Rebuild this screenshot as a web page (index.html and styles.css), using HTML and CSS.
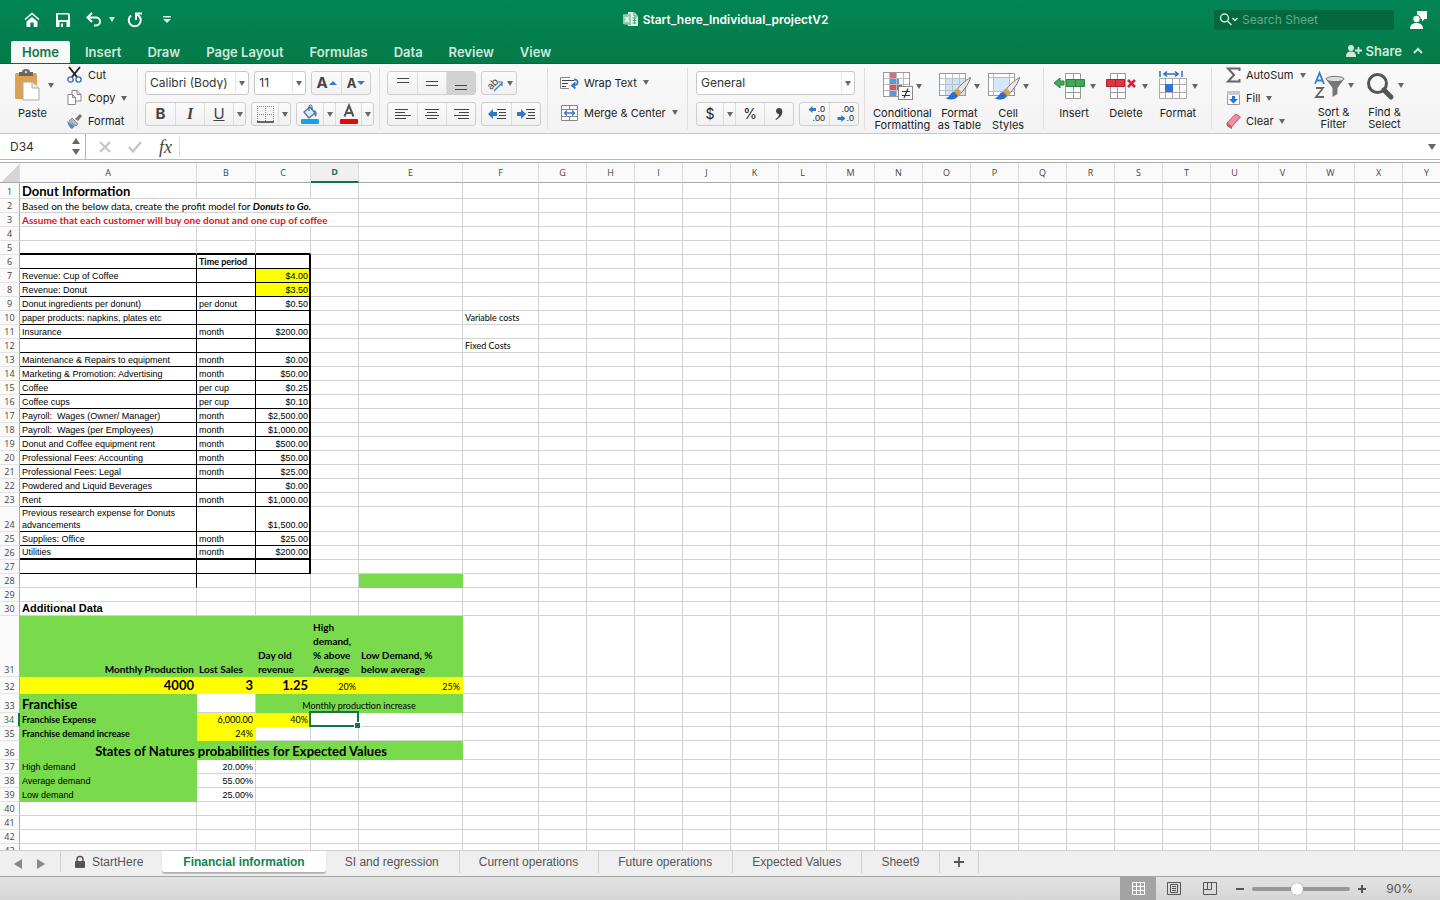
FILE: index.html
```html
<!DOCTYPE html>
<html lang="en">
<head>
<meta charset="utf-8">
<title>Start_here_Individual_projectV2</title>
<link rel="stylesheet" href="styles.css">
</head>
<body>
<header class="top">
  <div class="titlebar">
    <div class="quick">
      <button aria-label="Home"><svg width="16" height="16" viewBox="0 0 16 16"><path d="M1 7.500 8 1.500l7 6" fill="none" stroke="#fff" stroke-width="1.600"/><path d="M2.500 9.600 8 5l5.500 4.600V15H9.700v-4.500H6.300V15H2.500z" fill="#fff"/></svg></button>
      <button aria-label="Save" class="q-save"><svg width="14" height="14" viewBox="0 0 14 14"><path d="M0 0h12.500L14 1.500V14H0zM2 1.500V7h10V1.500zM3.500 9v5h7V9zM5 10.500h2V14H5z" fill="#fff" fill-rule="evenodd"/></svg></button>
      <button aria-label="Undo" class="q-undo"><svg width="17" height="15" viewBox="0 0 17 15"><path d="M6 1 1.500 5.500 6 10M2 5.500h8a4 4 0 0 1 0 8H8" fill="none" stroke="#fff" stroke-width="2"/></svg><i class="caret light"></i></button>
      <button aria-label="Redo" class="q-redo"><svg width="16" height="16" viewBox="0 0 16 16"><path d="M4 3.500A6 6 0 1 0 12 4L9.500 2" fill="none" stroke="#fff" stroke-width="2"/><path d="M9 8V1.500h6" fill="none" stroke="#fff" stroke-width="2"/></svg></button>
      <button aria-label="Customize toolbar" class="q-more"><svg width="8" height="8" viewBox="0 0 8 8"><path d="M0 0h8v1.500H0zM0 3h8L4 7z" fill="#e4f3ea"/></svg></button>
    </div>
    <h1 class="doc"><svg width="16" height="15" viewBox="0 0 16 15"><path d="M5 0h6l4 4v10H5z" fill="#e6f4ec"/><path d="M11 0v4h4" fill="none" stroke="#3c9a6c"/><path d="M0 2.500 8 1.500v12L0 12z" fill="#8fcbac"/><path d="m2 5 4 5M6 5l-4 5" stroke="#fff" stroke-width="1.300"/><path d="M9.500 6h4M9.500 8.500h4M9.500 11h4M11.500 5v7" stroke="#4fa87c"/></svg>Start_here_Individual_projectV2</h1>
    <div class="right">
      <label class="search"><svg width="20" height="13" viewBox="0 0 20 13"><circle cx="5.500" cy="5" r="4" fill="none" stroke="#d5ecdf" stroke-width="1.400"/><path d="m8.500 8 4 4M13.500 5l2.500 2.500L18.500 5" fill="none" stroke="#d5ecdf" stroke-width="1.400"/></svg><input type="search" placeholder="Search Sheet" aria-label="Search Sheet"></label>
      <button aria-label="Account"><svg width="18" height="18" viewBox="0 0 18 18"><path d="M8 0h10v8h-2.500L13 10.500V8H8z" fill="#fff"/><circle cx="7.500" cy="8" r="3.800" fill="#fff" stroke="#047f4e"/><path d="M1 18c0-4 2.500-6 6.500-6s6.500 2 6.500 6z" fill="#fff"/></svg></button>
    </div>
  </div>
  <nav class="tabs">
    <button class="on">Home</button><button>Insert</button><button>Draw</button><button>Page Layout</button><button>Formulas</button><button>Data</button><button>Review</button><button>View</button>
    <button class="share"><svg width="16" height="12" viewBox="0 0 16 12"><circle cx="5" cy="3" r="3" fill="#cfe9da"/><path d="M0 12c0-4 1.500-5.500 5-5.500s5 1.500 5 5.500z" fill="#cfe9da"/><path d="M12.500 2v7M9 5.500h7" stroke="#cfe9da" stroke-width="1.800"/></svg>Share</button>
    <button class="fold" aria-label="Collapse ribbon"><svg width="10" height="7" viewBox="0 0 10 7"><path d="m1 6 4-4 4 4" fill="none" stroke="#cfe9da" stroke-width="2"/></svg></button>
  </nav>
</header>

<section class="ribbon" aria-label="Home">
  <div class="group clip">
    <button class="big paste"><span class="pic"><svg width="26" height="32" viewBox="0 0 26 32"><rect x="0" y="4" width="22" height="26" rx="1.500" fill="#dca252"/><path d="M4 7V3h3a4 3 0 0 1 8 0h3v4z" fill="#666"/><circle cx="11" cy="3" r="1.300" fill="#ccc"/><path d="M8 13h9l7 6v12H8z" fill="#fff" stroke="#aaa"/><path d="M17 13v6h7" fill="#eee" stroke="#aaa"/></svg><i class="caret"></i></span>Paste</button>
    <div class="list">
      <button><svg width="15" height="16" viewBox="0 0 15 16"><path d="m2 0 8 10M13 0 5 10" stroke="#222" stroke-width="2"/><circle cx="3.500" cy="12.500" r="2.600" fill="none" stroke="#3f6fb5" stroke-width="1.400"/><circle cx="11.500" cy="12.500" r="2.600" fill="none" stroke="#3f6fb5" stroke-width="1.400"/></svg>Cut</button>
      <button><svg width="15" height="16" viewBox="0 0 15 16"><path d="M5 .5h5l4 4V11H5z" fill="#fff" stroke="#888"/><path d="M1 4.500h4.500l3 3v7H1z" fill="#fff" stroke="#888"/><path d="M10 .5v4h4M5.500 4.500v3h3" fill="none" stroke="#888"/></svg>Copy<i class="caret"></i></button>
      <button><svg width="15" height="15" viewBox="0 0 15 15"><path d="m8 5 5-5 2 2-4 5z" fill="#777"/><path d="m5 4 6 6-2 2-7-5z" fill="#bbb" stroke="#777" stroke-width=".8"/><path d="m0 7 8 5-3 3c-2-1-4-4-5-8z" fill="#5b83cf"/></svg>Format</button>
    </div>
  </div>

  <div class="group rows font">
    <div class="row">
      <span class="sel fam"><select aria-label="Font"><option>Calibri (Body)</option></select></span>
      <span class="sel size"><select aria-label="Font size"><option>11</option></select></span>
      <span class="seg"><button aria-label="Increase font size"><b class="glyph">A</b><i class="tri up"></i></button><button aria-label="Decrease font size"><b class="glyph sm">A</b><i class="tri dn"></i></button></span>
    </div>
    <div class="row">
      <span class="seg"><button class="glyph"><b>B</b></button><button class="glyph it">I</button><button class="glyph un">U</button><button class="nar" aria-label="Underline options"><i class="caret"></i></button></span>
      <span class="seg"><button class="mid" aria-label="Borders"><svg width="17" height="17" viewBox="0 0 17 17"><path d="M.5 0v16M8.500 0v16M16.500 0v16M0 .5h17M0 8.500h17" stroke="#888" stroke-dasharray="1 1"/><path d="M0 16h17" stroke="#333" stroke-width="1.500"/></svg></button><button class="nar" aria-label="Border options"><i class="caret"></i></button></span>
      <span class="seg color"><button class="mid" aria-label="Fill color"><svg width="18" height="19" viewBox="0 0 18 19"><path d="m3 7 6-5 5 6-6 5z" fill="#dfe9f6" stroke="#4a7ab8" stroke-width="1.300"/><path d="M8 6V1.500a1.500 1.500 0 0 1 3 0V5" fill="none" stroke="#555"/><path d="M13 5c3 1 3 4 2 7-2-1-2-4-2-7z" fill="#4a7ab8"/><rect y="14" width="18" height="5" rx="1" fill="#14a5e0"/></svg></button><button class="nar" aria-label="Fill color options"><i class="caret"></i></button><button class="mid" aria-label="Font color"><svg width="18" height="19" viewBox="0 0 18 19"><path d="m4.500 11.500 4.500-11 4.500 11M6 8h6" fill="none" stroke="#555" stroke-width="2"/><rect y="14" width="18" height="5" rx="1" fill="#e6060c"/></svg></button><button class="nar" aria-label="Font color options"><i class="caret"></i></button></span>
    </div>
  </div>

  <div class="group rows align">
    <div class="row">
      <span class="seg"><button aria-label="Top align"><svg width="16" height="16" viewBox="0 0 16 16"><path d="M2 3.500h12M2 7.500h12" stroke="#444"/></svg></button><button aria-label="Middle align"><svg width="16" height="16" viewBox="0 0 16 16"><path d="M2 6.500h12M2 10.500h12" stroke="#444"/></svg></button><button class="pressed" aria-label="Bottom align"><svg width="16" height="16" viewBox="0 0 16 16"><path d="M2 10.500h12M2 14.500h12" stroke="#444"/></svg></button></span>
      <span class="seg"><button class="orient" aria-label="Orientation"><svg width="18" height="18" viewBox="0 0 18 18"><text x="1" y="13" transform="rotate(-45 7 10)" class="ab">ab</text><path d="m8 17 8-8M12 8h4v4" fill="none" stroke="#3579c8" stroke-width="1.200"/></svg><i class="caret"></i></button></span>
    </div>
    <div class="row">
      <span class="seg"><button aria-label="Align left"><svg width="16" height="12" viewBox="0 0 16 12"><path d="M0 1.500h13M0 4.500h10M0 7.500h16M0 10.500h11" stroke="#444"/></svg></button><button aria-label="Center"><svg width="16" height="12" viewBox="0 0 16 12"><path d="M1 1.500h14M3 4.500h10M1 7.500h14M3 10.500h10" stroke="#444"/></svg></button><button aria-label="Align right"><svg width="16" height="12" viewBox="0 0 16 12"><path d="M1 1.500h15M6 4.500h10M1 7.500h15M5 10.500h11" stroke="#444"/></svg></button></span>
      <span class="seg"><button aria-label="Decrease indent"><svg width="18" height="12" viewBox="0 0 18 12"><path d="M9 1.500h9M11 4.500h7M11 7.500h7M9 10.500h9" stroke="#444"/><path d="m0 6 5-5v3h4v4H5v3z" fill="#3478c9"/></svg></button><button aria-label="Increase indent"><svg width="18" height="12" viewBox="0 0 18 12"><path d="M9 1.500h9M11 4.500h7M11 7.500h7M9 10.500h9" stroke="#444"/><path d="m9 6-5-5v3H0v4h4v3z" fill="#3478c9"/></svg></button></span>
    </div>
  </div>

  <div class="group rows wrapg">
    <button class="line"><svg width="20" height="14" viewBox="0 0 20 14"><path d="M9 12.500H.5V1.500H10" fill="none" stroke="#888"/><path d="M2 4.500h12M2 7.500h6M2 10.500h4" stroke="#444"/><path d="M14 3.500c5 0 5 6-1 6M15.500 6.500l-3.500 3 3.500 3" fill="none" stroke="#3478c9" stroke-width="1.800"/></svg>Wrap Text<i class="caret"></i></button>
    <button class="line"><svg width="20" height="16" viewBox="0 0 20 16"><path d="M1.500.5h16v15h-16zM1.500 4.500h16M1.500 11.500h16M9.500.5v4M9.500 11.500v4" fill="#fff" stroke="#888"/><path d="M5 8h9M7 5.500 4.500 8 7 10.500M12 5.500 14.500 8 12 10.500" fill="none" stroke="#3478c9" stroke-width="1.300"/></svg>Merge &amp; Center<i class="caret"></i></button>
  </div>

  <div class="group rows num">
    <div class="row"><span class="sel gen"><select aria-label="Number format"><option>General</option></select></span></div>
    <div class="row">
      <span class="seg"><button class="mid cur">$</button><button class="nar" aria-label="Currency options"><i class="caret"></i></button><button class="cur">%</button><button aria-label="Comma style"><svg width="8" height="14" viewBox="0 0 8 14"><path d="M4 1c5 0 5 8-3 12l-.500-1c3-2 3.500-3 3.500-5C0 7 0 1 4 1z" fill="#444"/></svg></button></span>
      <span class="seg"><button class="dec" aria-label="Increase decimal"><span><i class="arl"></i>.0</span><span>.00</span></button><button class="dec" aria-label="Decrease decimal"><span>.00</span><span><i class="arr"></i>.0</span></button></span>
    </div>
  </div>

  <div class="group bigs styles">
    <button class="big"><span class="pic"><svg width="32" height="30" viewBox="0 0 32 30"><rect x="1.500" y="1.500" width="26" height="24" fill="#fff" stroke="#999"/><path d="M8 2h6v6H8z" fill="#e46a72"/><path d="M8 8h9v6H8z" fill="#5c95dc"/><path d="M8 14h12v6H8z" fill="#e0525f"/><path d="M8 20h6v5H8z" fill="#5c95dc"/><path d="M7.500 2v23M14.500 2v23M21.500 2v23M2 7.500h25M2 13.500h25M2 19.500h25" stroke="#bbb"/><rect x="16.500" y="15.500" width="14" height="13" fill="#fff" stroke="#888"/><path d="M20 20.500h8M20 24.500h8M26 17.500l-4 9.500" stroke="#333" stroke-width="1.200"/></svg><i class="caret"></i></span>Conditional<br>Formatting</button>
    <button class="big"><span class="pic"><svg width="34" height="30" viewBox="0 0 34 30"><rect x="1.500" y="2.500" width="26" height="22" fill="#fff" stroke="#999"/><path d="M8 8h19v16H8z" fill="#cfe2f5"/><path d="M7.500 3v21M14.500 3v21M21.500 3v21M2 7.500h25M2 13.500h25M2 19.500h25" stroke="#b5c4d2"/><path d="M32.500 6.500c-5 3-11 8-13.500 12.500l3.500 3.500c4-4 9-11 10-16z" fill="#e8e8e8" stroke="#777"/><path d="m15.500 20 3.500-2.500c2 .5 4 2.500 4 4.500l-3 4z" fill="#e0a140"/><path d="M7.500 27c5 0 4-6 9-6l3.500 4c-2 4-8 4.500-12.500 2z" fill="#2a6fd0"/></svg><i class="caret"></i></span>Format<br>as Table</button>
    <button class="big"><span class="pic"><svg width="34" height="30" viewBox="0 0 34 30"><rect x="1.500" y="2.500" width="26" height="22" fill="#fff" stroke="#999"/><path d="M7 7h16v13H7z" fill="#d5e6f8"/><path d="M6.500 3v21M22.500 3v21M2 6.500h25M2 20.500h25" stroke="#bbb"/><path d="M32.500 6.500c-5 3-11 8-13.500 12.500l3.500 3.500c4-4 9-11 10-16z" fill="#e8e8e8" stroke="#777"/><path d="m15.500 20 3.500-2.500c2 .5 4 2.500 4 4.500l-3 4z" fill="#e0a140"/><path d="M7.500 27c5 0 4-6 9-6l3.500 4c-2 4-8 4.500-12.500 2z" fill="#2a6fd0"/></svg><i class="caret"></i></span>Cell<br>Styles</button>
  </div>

  <div class="group bigs cells">
    <button class="big"><span class="pic"><svg width="33" height="28" viewBox="0 0 33 28"><path d="M12.500 1.500h15v25h-15zM20.500 1v25M12.500 7.500h15M12.500 20.500h15" fill="#fff" stroke="#999"/><path d="M13.500 7.500h18v7h-18z" fill="#43a853" stroke="#2b8440"/><path d="M22.500 8v6" stroke="#2b8440"/><path d="m1 11 6-5v3h4v4H7v3z" fill="#43a853" stroke="#2b8440"/></svg><i class="caret"></i></span>Insert</button>
    <button class="big"><span class="pic"><svg width="33" height="28" viewBox="0 0 33 28"><path d="M5.500 1.500h15v25h-15zM12.500 1v25M5.500 7.500h15M5.500 20.500h15" fill="#fff" stroke="#999"/><path d="M1.500 7.500h18v7h-18z" fill="#e03545" stroke="#b3202f"/><path d="M10.500 8v6" stroke="#b3202f"/><path d="m23 8 7 7M30 8l-7 7" stroke="#d02738" stroke-width="2.600"/></svg><i class="caret"></i></span>Delete</button>
    <button class="big"><span class="pic"><svg width="30" height="30" viewBox="0 0 30 30"><path d="M2 0v6M24 0v6" stroke="#2a6fc4" stroke-width="1.500"/><path d="M6 3h14M9 .5 6 3l3 2.500M17 .5 20 3l-3 2.500" fill="none" stroke="#2a6fc4" stroke-width="1.600"/><path d="M1.500 7.500h27v20h-27zM7.500 7.500v20M14.500 7.500v20M21.500 7.500v20M1.500 13.500h27M1.500 21.500h27" fill="#fff" stroke="#aaa"/><path d="M7 13h8v8H7z" fill="#2f78d2"/></svg><i class="caret"></i></span>Format</button>
  </div>

  <div class="group edit">
    <div class="list">
      <button><svg width="15" height="16" viewBox="0 0 15 16"><path d="M13.500 4V1.500H2L8 8l-6 6.500h11.500V12" fill="none" stroke="#666" stroke-width="2"/></svg>AutoSum<i class="caret wide"></i></button>
      <button><svg width="15" height="16" viewBox="0 0 15 16"><path d="M1.500 1.500h12v13h-12z" fill="#fff" stroke="#999"/><path d="M1 1h13v4H1z" fill="#c8c8c8"/><path d="M6 6h3v3h3l-4.500 4.500L3 9h3z" fill="#2f74cc"/></svg>Fill<i class="caret"></i></button>
      <button><svg width="15" height="16" viewBox="0 0 15 16"><path d="M1 10 9.500 1l5 3-9 10z" fill="#f58ba4" stroke="#c05570"/><path d="m1 10 4.500 4v1.500l-4.500-3z" fill="#d5526f" stroke="#c05570"/></svg>Clear<i class="caret"></i></button>
    </div>
    <button class="big"><span class="pic"><svg width="30" height="28" viewBox="0 0 30 28"><path d="m1 12 4.500-11L10 12M2.500 8.500h6" fill="none" stroke="#2f80d0" stroke-width="1.800"/><path d="M2 16h7L2 25h8" fill="none" stroke="#666" stroke-width="1.800"/><path d="M12 7h18l-6.500 9v6l-5 3v-9z" fill="#777"/><ellipse cx="21" cy="7" rx="9" ry="2.600" fill="#ddd" stroke="#777"/></svg><i class="caret"></i></span>Sort &amp;<br>Filter</button>
    <button class="big"><span class="pic"><svg width="28" height="28" viewBox="0 0 28 28"><circle cx="11.500" cy="11.500" r="9" fill="none" stroke="#555" stroke-width="3"/><path d="m18 18 7 7" stroke="#555" stroke-width="5" stroke-linecap="round"/></svg><i class="caret"></i></span>Find &amp;<br>Select</button>
  </div>
</section>

<section class="formula">
  <div class="namebox"><input value="D34" aria-label="Name box"><span class="spin"><i class="su"></i><i class="sd"></i></span></div>
  <button aria-label="Cancel"><svg width="12" height="12" viewBox="0 0 12 12"><path d="m1 1 10 10M11 1 1 11" stroke="#c4c4c4" stroke-width="2"/></svg></button>
  <button aria-label="Enter"><svg width="14" height="12" viewBox="0 0 14 12"><path d="m1 6 4 4.500L13 1" fill="none" stroke="#c4c4c4" stroke-width="2.200"/></svg></button>
  <button class="fx" aria-label="Insert function">fx</button>
  <input class="fbar" aria-label="Formula">
  <button class="expand" aria-label="Expand formula bar"><i class="sd"></i></button>
</section>

<main class="sheet">
<table id="grid">
<colgroup><col class="c0"><col class="ca"><col class="cb"><col class="cc"><col class="cd"><col class="ce"><col class="cf"></colgroup>
<thead><tr><th class="corner"></th><th>A</th><th>B</th><th>C</th><th class="cur">D</th><th>E</th><th>F</th></tr></thead>
<tbody>
<tr class="h16"><th>1</th><td class="t1">Donut Information</td></tr>
<tr><th>2</th><td colspan="4" class="cal t2">Based on the below data, create the profit model for <b><i>Donuts to Go.</i></b></td></tr>
<tr><th>3</th><td colspan="4" class="cal t2 red">Assume that each customer will buy one donut and one cup of coffee</td></tr>
<tr><th>4</th></tr>
<tr class="thick"><th>5</th><td></td><td></td><td></td></tr>
<tr class="box"><th>6</th><td></td><td class="cal"><b>Time period</b></td><td></td></tr>
<tr class="box"><th>7</th><td>Revenue: Cup of Coffee</td><td></td><td class="y">$4.00</td></tr>
<tr class="box"><th>8</th><td>Revenue: Donut</td><td></td><td class="y">$3.50</td></tr>
<tr class="box"><th>9</th><td>Donut ingredients per donunt)</td><td>per donut</td><td>$0.50</td></tr>
<tr class="box"><th>10</th><td>paper products: napkins, plates etc</td><td></td><td></td><td></td><td></td><td class="cal">Variable costs</td></tr>
<tr class="box"><th>11</th><td>Insurance</td><td>month</td><td>$200.00</td></tr>
<tr class="box"><th>12</th><td></td><td></td><td></td><td></td><td></td><td class="cal">Fixed Costs</td></tr>
<tr class="box"><th>13</th><td>Maintenance &amp; Repairs to equipment</td><td>month</td><td>$0.00</td></tr>
<tr class="box"><th>14</th><td>Marketing &amp; Promotion: Advertising</td><td>month</td><td>$50.00</td></tr>
<tr class="box"><th>15</th><td>Coffee</td><td>per cup</td><td>$0.25</td></tr>
<tr class="box"><th>16</th><td>Coffee cups</td><td>per cup</td><td>$0.10</td></tr>
<tr class="box"><th>17</th><td>Payroll:&nbsp; Wages (Owner/ Manager)</td><td>month</td><td>$2,500.00</td></tr>
<tr class="box"><th>18</th><td>Payroll:&nbsp; Wages (per Employees)</td><td>month</td><td>$1,000.00</td></tr>
<tr class="box"><th>19</th><td>Donut and Coffee equipment rent</td><td>month</td><td>$500.00</td></tr>
<tr class="box"><th>20</th><td>Professional Fees: Accounting</td><td>month</td><td>$50.00</td></tr>
<tr class="box"><th>21</th><td>Professional Fees: Legal</td><td>month</td><td>$25.00</td></tr>
<tr class="box"><th>22</th><td>Powdered and Liquid Beverages</td><td></td><td>$0.00</td></tr>
<tr class="box"><th>23</th><td>Rent</td><td>month</td><td>$1,000.00</td></tr>
<tr class="box h25"><th>24</th><td>Previous research expense for Donuts<br>advancements</td><td></td><td>$1,500.00</td></tr>
<tr class="box"><th>25</th><td>Supplies: Office</td><td>month</td><td>$25.00</td></tr>
<tr class="box last"><th>26</th><td>Utilities</td><td>month</td><td>$200.00</td></tr>
<tr class="box"><th>27</th><td></td><td></td><td></td></tr>
<tr><th>28</th><td class="edge"></td><td></td><td></td><td></td><td class="g"></td></tr>
<tr><th>29</th></tr>
<tr><th>30</th><td class="t30">Additional Data</td></tr>
<tr class="h61 cal strong"><th>31</th><td class="g r">Monthly Production</td><td class="g">Lost Sales</td><td class="g">Day old<br>revenue</td><td class="g">High<br>demand,<br>% above<br>Average</td><td class="g">Low Demand, %<br>below average</td></tr>
<tr class="h17 cal"><th>32</th><td class="y r big32">4000</td><td class="y r big32">3</td><td class="y r big32">1.25</td><td class="y r">20%</td><td class="y r">25%</td></tr>
<tr class="h19 cal"><th>33</th><td class="g big32">Franchise</td><td></td><td colspan="3" class="g c">Monthly production increase</td></tr>
<tr class="cal"><th class="cur">34</th><td class="g"><b>Franchise Expense</b></td><td class="y r">6,000.00</td><td class="y r">40%</td><td class="active"><span class="ring"></span></td></tr>
<tr class="cal"><th>35</th><td class="g"><b>Franchise demand increase</b></td><td class="y r">24%</td></tr>
<tr class="h19 cal"><th>36</th><td colspan="5" class="g c big32">States of Natures probabilities for Expected Values</td></tr>
<tr><th>37</th><td class="g">High demand</td><td class="r">20.00%</td></tr>
<tr><th>38</th><td class="g">Average demand</td><td class="r">55.00%</td></tr>
<tr><th>39</th><td class="g">Low demand</td><td class="r">25.00%</td></tr>
<tr><th>40</th></tr>
<tr><th>41</th></tr>
<tr><th>42</th></tr>
<tr><th>43</th></tr>
</tbody>
</table>
</main>

<footer>
  <div class="sheets">
    <div class="nav"><button aria-label="Previous sheet"><i class="pl"></i></button><button aria-label="Next sheet"><i class="pr"></i></button></div>
    <button class="tab"><svg width="10" height="12" viewBox="0 0 10 12"><rect y="5" width="10" height="7" rx="1" fill="#555"/><path d="M2 6V3.500a3 3 0 0 1 6 0V6" fill="none" stroke="#555" stroke-width="1.500"/></svg>StartHere</button>
    <button class="tab on">Financial information</button>
    <button class="tab">SI and regression</button>
    <button class="tab">Current operations</button>
    <button class="tab">Future operations</button>
    <button class="tab">Expected Values</button>
    <button class="tab">Sheet9</button>
    <button class="tab add" aria-label="Add sheet"><svg width="10" height="10" viewBox="0 0 10 10"><path d="M5 0v10M0 5h10" stroke="#555" stroke-width="1.800"/></svg></button>
  </div>
  <div class="status">
    <button class="view on" aria-label="Normal view"><svg width="13" height="13" viewBox="0 0 13 13"><path d="M.5.5h12v12H.5zM4.500 0v13M8.500 0v13M0 4.500h13M0 8.500h13" fill="none" stroke="#fff"/></svg></button>
    <button class="view" aria-label="Page layout"><svg width="14" height="13" viewBox="0 0 14 13"><path d="M.5.5h13v12H.5zM3.500 2.500h7v8h-7zM5 4.500h4M5 6.500h4M5 8.500h4" fill="none" stroke="#555"/></svg></button>
    <button class="view" aria-label="Page break preview"><svg width="14" height="13" viewBox="0 0 14 13"><path d="M.5.5h13v12H.5zM4.500.5v7M8.500.5v7M.5 7.500h8" fill="none" stroke="#555"/></svg></button>
    <button class="zb" aria-label="Zoom out"><svg width="8" height="8" viewBox="0 0 8 8"><path d="M0 4h8" stroke="#555" stroke-width="2"/></svg></button>
    <input type="range" min="10" max="170" value="82" aria-label="Zoom">
    <button class="zb" aria-label="Zoom in"><svg width="8" height="8" viewBox="0 0 8 8"><path d="M0 4h8M4 0v8" stroke="#555" stroke-width="2"/></svg></button>
    <output>90%</output>
  </div>
</footer>
<script src="grid.js"></script>
</body>
</html>
```
FILE: grid.js
```js
// Completes the header with its letters and every row with empty cells,
// as many columns as the window has room for.
const grid = document.getElementById('grid');
const FIXED_WIDTH = 539;
const FIXED_COLUMNS = 6;
const COLUMN_WIDTH = 48;
const count = FIXED_COLUMNS + Math.max(0, Math.ceil((window.innerWidth - FIXED_WIDTH) / COLUMN_WIDTH));
const name = n => (n < 26 ? '' : String.fromCharCode(64 + Math.floor(n / 26))) + String.fromCharCode(65 + (n % 26));
const cols = grid.querySelector('colgroup');
const head = grid.tHead.rows[0];
for (let n = FIXED_COLUMNS; n < count; n++) {
  cols.append(document.createElement('col'));
  const th = document.createElement('th');
  th.textContent = name(n);
  head.append(th);
}
for (const row of grid.tBodies[0].rows) {
  let used = -1;
  for (const cell of row.cells) used += cell.colSpan;
  for (; used < count; used++) row.insertCell();
}
```
FILE: styles.css
```css
* { box-sizing: border-box; }
body {
  margin: 0;
  height: 100vh;
  display: flex;
  flex-direction: column;
  overflow: hidden;
  font: 11px/12px Inter, "Liberation Sans", sans-serif;
  color: #222;
  background: #fff;
}
button, input, select {
  font: inherit;
  color: inherit;
  border: 0;
  margin: 0;
  padding: 0;
  background: none;
  outline: 0;
}
button { display: flex; align-items: center; justify-content: center; white-space: nowrap; }
svg { flex: none; display: block; overflow: visible; }

/* title bar and ribbon tabs */
.top { background: linear-gradient(#038556, #047a47); border-bottom: 1px solid #046b3d; flex: none; }
.titlebar { height: 41px; display: grid; grid-template-columns: 1fr auto 1fr; align-items: center; padding: 0 13px 2px 24px; }
.quick { display: flex; align-items: center; }
.q-save { margin-left: 16px; }
.q-undo { margin-left: 16px; gap: 6px; }
.q-redo { margin-left: 12px; }
.q-more { margin-left: 20px; }
.doc { margin: 0; display: flex; align-items: center; gap: 4px; font-size: 12px; line-height: 16px; font-weight: 600; color: #fff; }
.right { display: flex; justify-content: flex-end; align-items: center; gap: 15px; }
.search { display: flex; align-items: center; gap: 3px; width: 180px; height: 20px; padding: 0 5px; background: #04683f; border-radius: 3px; }
.search input { min-width: 0; flex: 1; font-size: 12px; line-height: 16px; color: #fff; appearance: none; }
.search input::placeholder { color: #5fae8a; }
.tabs { display: flex; height: 22px; padding: 0 17px 0 11px; }
.tabs button { padding: 0 13px; font-size: 13px; line-height: 16px; font-weight: 600; color: #cfe9da; }
.tabs .on { background: #f8f8f8; color: #11774a; padding: 0 11px; margin-right: 2px; border-radius: 2px 2px 0 0; }
.tabs .share { margin-left: auto; padding: 0 0 3px; gap: 4px; }
.tabs .fold { padding: 0 0 3px 11px; }

/* ribbon */
.ribbon { display: flex; flex: none; height: 70px; background: linear-gradient(#f9f9f9, #f3f3f3); border-bottom: 1px solid #c6c6c6; overflow: hidden; }
.group { position: relative; display: flex; flex: none; padding: 7px 8px; }
.group + .group::before { content: ""; position: absolute; left: 0; top: 4px; bottom: 4px; width: 1px; background: #dedede; }
.rows { flex-direction: column; gap: 7px; }
.row { display: flex; gap: 5px; }
.caret { flex: none; border: 3px solid transparent; border-top: 5px solid #666; border-bottom: 0; width: 6px; height: 5px; }
.caret.light { border-top-color: #cfe9da; }
.big { flex-direction: column; justify-content: flex-start; font-size: 11px; line-height: 12px; }
.pic { display: flex; align-items: center; gap: 4px; height: 30px; margin-bottom: 6px; }
.list { display: flex; flex-direction: column; gap: 7px; }
.list button { justify-content: flex-start; height: 16px; gap: 6px; }
.clip { width: 137px; padding: 3px 8px 3px 14px; gap: 16px; }
.clip .big { padding-top: 3px; width: 37px; }
.clip .pic { gap: 7px; margin: 0 -2px 7px 2px; }
.font { width: 242px; }
.align { width: 168px; }
.wrapg { width: 140px; padding-left: 13px; }
.num { width: 177px; padding-left: 9px; }
.line { height: 23px; gap: 4px; justify-content: flex-start; }
.line .caret { margin-left: 2px; }
.sel { position: relative; display: flex; height: 24px; border: 1px solid #c8c8c8; border-radius: 3px; background: #fff; }
.sel::after { content: ""; position: absolute; right: 3px; top: 9px; border: 3px solid transparent; border-top: 5px solid #666; border-bottom: 0; pointer-events: none; }
.sel::before { content: ""; position: absolute; right: 12px; top: 1px; bottom: 1px; width: 1px; background: #e6e6e6; pointer-events: none; }
.sel select { appearance: none; width: 100%; padding-left: 4px; font-size: 12px; color: #333; }
.fam { width: 105px; }
.size { width: 52px; }
.gen { width: 159px; }
.seg { display: flex; height: 24px; border: 1px solid #cecece; border-radius: 3px; background: linear-gradient(#fbfbfb, #f1f1f1); }
.seg button { width: 29px; border-left: 1px solid #dcdcdc; }
.seg button:first-child { border-left: 0; }
.seg .nar { width: 12px; }
.seg .mid { width: 26px; }
.seg .pressed { background: #d2d2d2; }
.seg .orient { width: 34px; gap: 3px; }
.glyph { font-size: 15px; line-height: 18px; color: #444; }
.sm { font-size: 13px; }
.seg .it { font-family: "Liberation Serif", serif; font-style: italic; font-weight: bold; font-size: 16px; }
.un { text-decoration: underline; }
.tri { border: 4px solid transparent; margin-left: 1px; }
.up { border-bottom: 4px solid #3478c9; border-top: 0; }
.dn { border-top: 4px solid #3478c9; border-bottom: 0; }
.ab { font: 10px Inter, sans-serif; fill: #444; }
.cur { font-size: 14px; line-height: 18px; }
.seg .dec { flex-direction: column; font: 9px/9px "Liberation Sans", sans-serif; align-items: flex-end; padding-right: 4px; }
.dec span { display: flex; align-items: center; gap: 1px; }
.arl, .arr { width: 8px; height: 7px; background: #3478c9; clip-path: polygon(0 50%, 50% 0, 50% 30%, 100% 30%, 100% 70%, 50% 70%, 50% 100%); }
.arr { clip-path: polygon(100% 50%, 50% 0, 50% 30%, 0 30%, 0 70%, 50% 70%, 50% 100%); }
.styles { width: 179px; gap: 6px; padding-left: 9px; }
.styles .pic { gap: 2px; }
.cells { width: 168px; gap: 16px; padding-left: 13px; }
.cells .big { width: 36px; }
.edit { flex: 1; padding: 3px 8px 3px 15px; }
.edit .list { width: 82px; }
.edit .big { padding-top: 4px; width: 51px; }
.edit .list button { gap: 5px; }
.caret.wide { margin-left: 2px; }

/* formula bar */
.formula { display: flex; align-items: center; flex: none; height: 29px; border-bottom: 1px solid #a8aca8; box-shadow: inset 0 -2px #fff, inset 0 -3px #b8bcb8; padding-bottom: 3px; }
.namebox { display: flex; align-items: center; width: 86px; height: 26px; border-right: 1px solid #b5b5b5; margin-right: 13px; padding: 0 5px 0 10px; }
.namebox input { width: 60px; font-size: 12px; color: #333; }
.spin { display: flex; flex-direction: column; gap: 5px; margin-left: auto; }
.su, .sd { display: block; border: 4px solid transparent; border-bottom: 6px solid #666; border-top: 0; }
.sd { border-top: 6px solid #666; border-bottom: 0; }
.formula button { margin-right: 17px; }
.formula .fx { font: italic 18px/20px "Liberation Serif", serif; margin: 0 7px 0 0; color: #444; }
.fbar { flex: 1; height: 20px; border-left: 1px solid #ddd; font-size: 12px; padding-left: 6px; }
.formula .expand { margin-right: 4px; }

/* grid */
.sheet { flex: 1; min-height: 0; overflow: hidden; }
table { table-layout: fixed; width: 0; border-collapse: separate; border-spacing: 0; }
col { width: 48px; }
.c0 { width: 20px; }
.ca { width: 177px; }
.cb { width: 59px; }
.cc { width: 55px; }
.cd { width: 48px; }
.ce { width: 104px; }
.cf { width: 76px; }
tr { height: 14px; }
.h16 { height: 16px; }
.h17 { height: 17px; }
.h19 { height: 19px; }
.h25 { height: 25px; }
.h61 { height: 61px; }
td { padding: 0 2px; border-right: 1px solid #d2d2d2; border-bottom: 1px solid #d2d2d2; font: 9px/12px "Liberation Sans", sans-serif; color: #000; vertical-align: bottom; white-space: nowrap; }
th { padding: 0; font: 9px/12px "Open Sans", sans-serif; color: #444; border-right: 1px solid #a9a9a9; border-bottom: 1px solid #e3e3e3; vertical-align: bottom; background: #fafafa; }
thead tr { height: 20px; }
thead th { vertical-align: middle; border-right: 1px solid #dcdcdc; border-bottom: 1px solid #a9a9a9; }
thead .cur { background: #f0f0f0; border-bottom: 2px solid #10754a; font-size: 9px; line-height: 12px; font-weight: bold; }
th.cur { color: #10754a; }
tbody th.cur { border-right: 2px solid #10754a; font-size: 9px; line-height: 12px; }
.corner { background: linear-gradient(135deg, #fafafa 55%, #d4d4d4 55%); }
.cal, .cal td { font-family: Lato, sans-serif; font-size: 9px; }
.t1 { font: bold 13px/14px Lato, sans-serif; }
.t2 { font-size: 10px; }
.t30 { font: bold 11px/13px "Liberation Sans", sans-serif; }
.red { color: #e0101c; font-weight: bold; }
.strong td { font-size: 10px; line-height: 14px; font-weight: bold; }
.cal .big32 { font-size: 13px; line-height: 16px; font-weight: bold; }
.r { text-align: right; }
.c { text-align: center; }
.y { background: #ff0; border-color: #ff0; }
.g { background: #79db4b; border-color: #79db4b; }
.thick td:nth-child(-n+4) { border-bottom: 2px solid #000; }
.box td:nth-child(-n+4) { border-right-color: #000; border-bottom-color: #000; }
.box td:nth-child(4) { border-right: 2px solid #000; padding-right: 1px; text-align: right; }
.last td:nth-child(-n+4) { border-bottom-width: 2px; }
.edge { border-right-color: #000; }
.active { position: relative; }
.ring { position: absolute; inset: -2px -1px -1px -2px; border: 2px solid #10754a; }
.ring::after { content: ""; position: absolute; right: -3px; bottom: -3px; width: 5px; height: 5px; background: #10754a; outline: 1px solid #fff; }

/* sheet tabs and status bar */
footer { flex: none; }
.sheets { display: flex; height: 27px; background: #efefef; border-top: 1px solid #cfcfcf; border-bottom: 1px solid #a3a6a3; }
.nav { display: flex; width: 61px; padding-left: 14px; gap: 15px; border-right: 1px solid #cfcfcf; height: 21px; }
.pl, .pr { border: 5px solid transparent; border-right: 8px solid #888; border-left: 0; margin-top: 5px; }
.pr { border-left: 8px solid #888; border-right: 0; }
.tab { height: 22px; padding: 0 20px 0 19px; font: 12px/14px "Liberation Sans", sans-serif; color: #555; border-right: 1px solid #cfcfcf; gap: 7px; }
.nav + .tab { padding: 0 19px 0 14px; border-right: 0; }
.sheets .on { background: #fff; color: #11834f; font-weight: bold; padding: 0 21px; border: 0; border-bottom: 1px solid #b0b0b0; border-radius: 0 0 3px 3px; box-shadow: 0 1px 1px #bbb; }
.tab.add { padding: 0 14px; }
.status { display: flex; align-items: center; justify-content: flex-end; height: 23px; background: linear-gradient(#e2e2e2, #d6d6d6); padding-right: 27px; color: #555; }
.view { width: 36px; height: 23px; }
.view.on { background: #a3a3a3; }
.zb { width: 8px; margin: 0 8px; }
.status input { appearance: none; width: 98px; height: 12px; }
.status input::-webkit-slider-runnable-track { height: 4px; border-radius: 2px; background: #999; }
.status input::-webkit-slider-thumb { appearance: none; width: 12px; height: 12px; margin-top: -4px; border-radius: 6px; background: #fff; box-shadow: 0 0 1px #666; }
.status output { margin-left: 12px; font-size: 12px; line-height: 14px; }
```
